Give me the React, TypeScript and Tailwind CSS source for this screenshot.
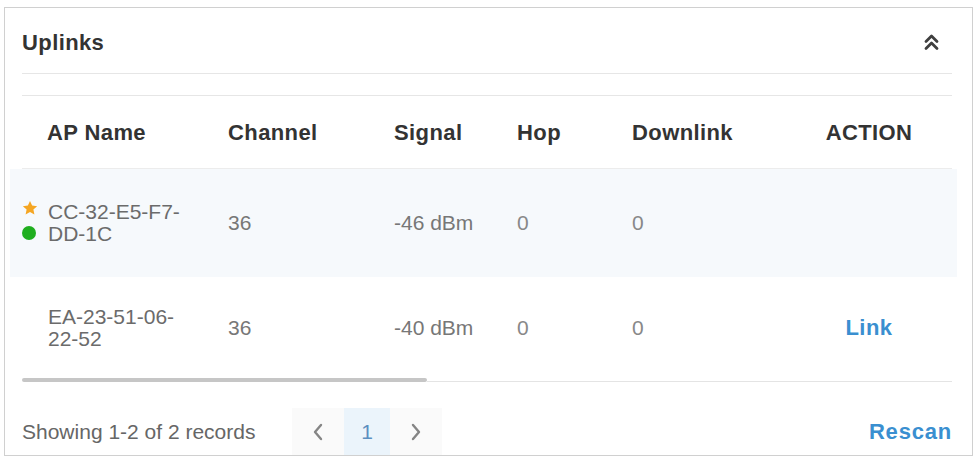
import type { ReactNode } from 'react'

const cols = 'grid grid-cols-[206px_166px_123px_115px_155px_164px] items-center'

function Star() {
  return (
    <svg width="16" height="16" viewBox="0 0 24 24">
      <path
        d="M12 1.5l3.2 6.9 7.5.9-5.6 5.1 1.5 7.4L12 18l-6.6 3.8 1.5-7.4L1.3 9.3l7.5-.9z"
        fill="#f5a623"
      />
    </svg>
  )
}

function DoubleUp() {
  return (
    <svg width="15" height="19" viewBox="0 0 15 19" fill="none" stroke="#3f3f3f" strokeWidth="2.8" strokeLinecap="round" strokeLinejoin="round">
      <path d="M2 8.5l5.5-5.5 5.5 5.5" />
      <path d="M2 15.5l5.5-5.5 5.5 5.5" />
    </svg>
  )
}

function Chevron({ dir }: { dir: 'left' | 'right' }) {
  return (
    <svg width="12" height="20" viewBox="0 0 12 20" fill="none" stroke="#858585" strokeWidth="2.4" strokeLinecap="round" strokeLinejoin="round">
      {dir === 'left' ? <path d="M9 3l-6 7 6 7" /> : <path d="M3 3l6 7-6 7" />}
    </svg>
  )
}

interface Uplink {
  name: string
  channel: string
  signal: string
  hop: string
  downlink: string
  current?: boolean
}

const uplinks: Uplink[] = [
  { name: 'CC-32-E5-F7-DD-1C', channel: '36', signal: '-46 dBm', hop: '0', downlink: '0', current: true },
  { name: 'EA-23-51-06-22-52', channel: '36', signal: '-40 dBm', hop: '0', downlink: '0' },
]

function Cell({ children, className = '' }: { children: ReactNode; className?: string }) {
  return <div className={`text-[21px] text-[#777] ${className}`}>{children}</div>
}

export default function App() {
  return (
    <div className="w-[976px] h-[460px] bg-white pt-[7px] pl-[4px] font-['Liberation_Sans',Arial,sans-serif]">
      <div className="w-[969px] border border-[#d0d0d0] pl-[17px] pr-[20px] flex flex-col">
        {/* title */}
        <div className="h-[66px] pt-[3px] flex items-center justify-between border-b border-[#e6e6e6]">
          <h2 className="text-[22px] font-bold text-[#333] tracking-[0.4px]">Uplinks</h2>
          <button className="mr-[13px] flex items-center">
            <DoubleUp />
          </button>
        </div>
        <div className="h-[22px] border-b border-[#e6e6e6]" />

        {/* header */}
        <div className={`${cols} h-[73px] border-b border-[#ececec] text-[22px] font-bold text-[#333] tracking-[0.4px]`}>
          <div className="pl-[25px]">AP Name</div>
          <div>Channel</div>
          <div>Signal</div>
          <div>Hop</div>
          <div>Downlink</div>
          <div className="text-center">ACTION</div>
        </div>

        {/* rows */}
        {uplinks.map((u) => (
          <div
            key={u.name}
            className={
              u.current
                ? '-ml-[12px] -mr-[5px] pl-[12px] pr-[5px] h-[108px] bg-[#f6f9fc] flex items-center'
                : 'h-[101px] flex items-center'
            }
          >
            <div className={`${cols} w-full`}>
              <div className="flex items-center">
                <div className="w-[26px] flex flex-col">
                  {u.current && (
                    <>
                      <div className="h-[22px] flex items-start -mt-[2px]">
                        <Star />
                      </div>
                      <div className="h-[22px] flex items-center">
                        <span className="w-[14px] h-[14px] rounded-full bg-[#1fae1f]" />
                      </div>
                    </>
                  )}
                </div>
                <div className="w-[146px] text-[21px] leading-[22px] text-[#6b6b6b]">{u.name}</div>
              </div>
              <Cell>{u.channel}</Cell>
              <Cell>{u.signal}</Cell>
              <Cell className="text-[#888]">{u.hop}</Cell>
              <Cell className="text-[#888]">{u.downlink}</Cell>
              <div className="text-center">
                {!u.current && (
                  <button className="text-[22px] font-bold text-[#3a8fd0] tracking-[0.5px]">Link</button>
                )}
              </div>
            </div>
          </div>
        ))}

        {/* horizontal scrollbar */}
        <div className="h-[4px] flex items-end">
          <div className="w-[405px] h-[4px] rounded-full bg-[#c6c6c6]" />
          <div className="flex-1 h-px bg-[#e4e4e4]" />
        </div>

        {/* footer */}
        <div className="mt-[26px] h-[47px] flex items-center">
          <div className="w-[270px] text-[21px] text-[#666]">Showing 1-2 of 2 records</div>
          <div className="flex h-full">
            <button className="w-[52px] h-full bg-[#fafafa] flex items-center justify-center">
              <Chevron dir="left" />
            </button>
            <button className="w-[46px] h-full bg-[#ebf4fb] text-[21px] text-[#5b8fc0]">1</button>
            <button className="w-[52px] h-full bg-[#fafafa] flex items-center justify-center">
              <Chevron dir="right" />
            </button>
          </div>
          <button className="ml-auto text-[22px] font-bold text-[#3a8fd0] tracking-[0.8px]">Rescan</button>
        </div>
      </div>
    </div>
  )
}
